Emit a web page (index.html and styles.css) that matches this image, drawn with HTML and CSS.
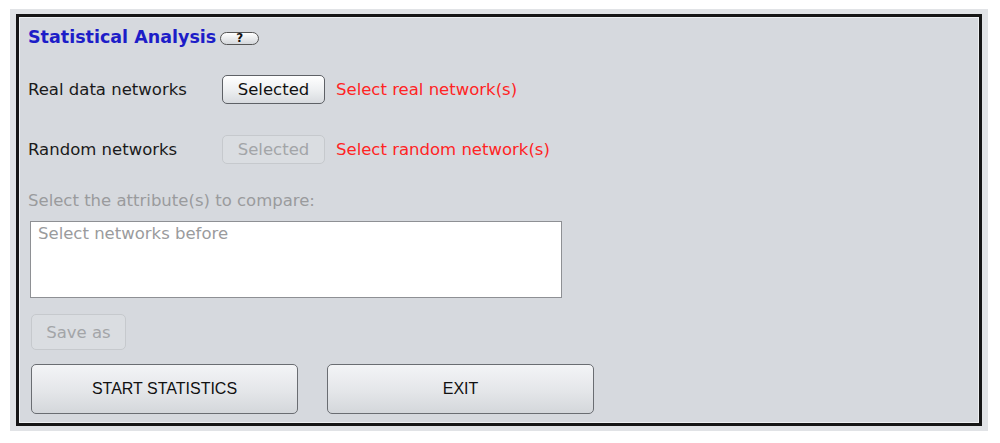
FILE: index.html
```html
<!doctype html>
<html lang="en">
<head>
	<meta charset="utf-8">
	<title>Statistical Analysis</title>
	<link rel="stylesheet" href="styles.css">
</head>
<body>

	<div class="window">
		<div class="frame">

			<h1 class="title">Statistical Analysis<button class="help">?</button></h1>

			<div class="row row-real">
				<span class="label">Real data networks</span>
				<button class="btn">Selected</button>
				<span class="warn">Select real network(s)</span>
			</div>

			<div class="row row-random">
				<span class="label">Random networks</span>
				<button class="btn" disabled>Selected</button>
				<span class="warn">Select random network(s)</span>
			</div>

			<p class="hint">Select the attribute(s) to compare:</p>

			<div class="list">Select networks before</div>

			<button class="btn save" disabled>Save as</button>

			<div class="actions">
				<button class="big">START STATISTICS</button>
				<button class="big">EXIT</button>
			</div>

		</div>
	</div>

</body>
</html>
```

FILE: styles.css
```css
html, body {
	margin: 0;
	padding: 0;
}

body {
	background: #ffffff;
	font-family: "DejaVu Sans", Verdana, sans-serif;
	font-size: 16.5px;
	color: #1a1a1a;
}

/*****/

.window {
	margin: 9px 0 0 10px;
	width: 978px;
	height: 422px;
	box-sizing: border-box;
	padding: 5px 6px 5px 6px;
	background: #e1e3e6;
}
.frame {
	height: 412px;
	box-sizing: border-box;
	border: 3px solid #161616;
	box-shadow: inset 0 0 0 1px #eef0f2;
	background: #d6d9de;
	padding: 8px 9px 0;
	display: flex;
	flex-direction: column;
	align-items: flex-start;
}

.title {
	margin: 0;
	font-size: 17.5px;
	font-weight: bold;
	color: #1d1dc8;
	line-height: 24px;
	display: flex;
	align-items: center;
}
.help {
	width: 39px;
	height: 13px;
	margin: 2px 0 0 4px;
	padding: 0;
	border: 1px solid #555;
	border-radius: 7px;
	background: linear-gradient(#ffffff, #d4d7db);
	font-family: "DejaVu Sans", sans-serif;
	font-size: 12px;
	font-weight: bold;
	line-height: 11px;
	color: #111;
}

.row {
	display: flex;
	align-items: center;
}
.row-real {
	margin-top: 26px;
}
.row-random {
	margin-top: 31px;
}
.label {
	width: 194px;
}
.warn {
	margin-left: 11px;
	color: #ff2424;
}

.btn {
	width: 103px;
	height: 29px;
	padding: 0;
	border: 1px solid #5e6166;
	border-radius: 5px;
	background: linear-gradient(#ffffff 0%, #eef0f2 50%, #d8dbdf 100%);
	font-family: "DejaVu Sans", sans-serif;
	font-size: 16.5px;
	color: #111;
}
.btn:disabled {
	border-color: #c6c9cd;
	background: #dadde1;
	color: #a3a5a8;
}

.hint {
	margin: 28px 0 0;
	color: #9a9b9d;
	line-height: 18px;
}

.list {
	margin: 11px 0 0 2px;
	width: 532px;
	height: 77px;
	box-sizing: border-box;
	border: 1px solid #8e9094;
	background: #ffffff;
	padding: 3px 7px;
	color: #9a9b9d;
	line-height: 18px;
}

.save {
	margin: 16px 0 0 3px;
	width: 95px;
	height: 36px;
}

.actions {
	margin: 14px 0 0 3px;
	display: flex;
	gap: 29px;
}
.big {
	width: 267px;
	height: 50px;
	padding: 0;
	border: 1px solid #6a6d72;
	border-radius: 5px;
	background: linear-gradient(#f3f4f6 0%, #e4e6e9 55%, #d4d7db 100%);
	font-family: "Liberation Sans", Arial, sans-serif;
	font-size: 16px;
	color: #111;
}
```
